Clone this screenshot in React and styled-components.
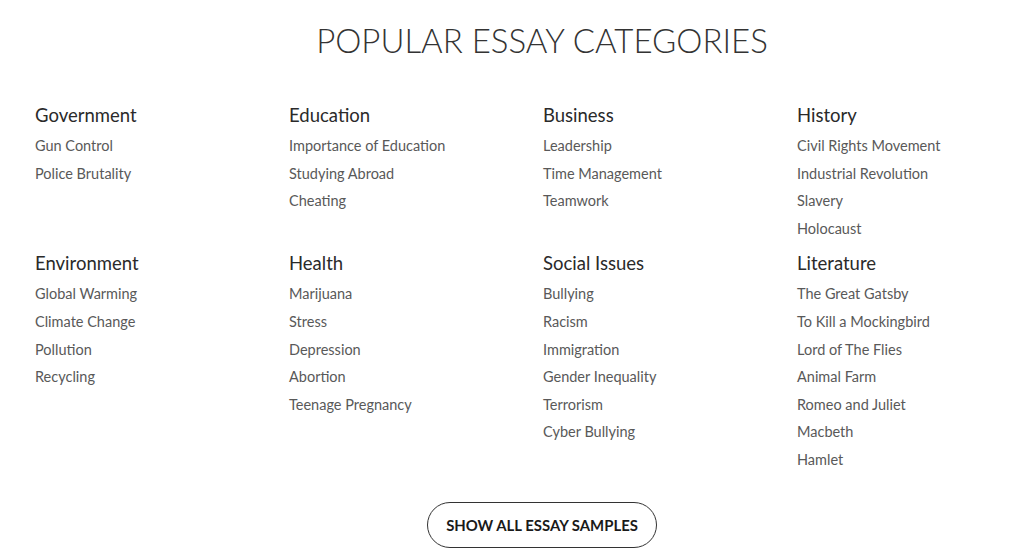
import React from 'react'
import styled, { createGlobalStyle } from 'styled-components'

const GlobalStyle = createGlobalStyle`
  body {
    margin: 0;
    background: #fff;
    font-family: "Lato", "Liberation Sans", sans-serif;
  }
`

const categories = [
  { title: 'Government', items: ['Gun Control', 'Police Brutality'] },
  { title: 'Education', items: ['Importance of Education', 'Studying Abroad', 'Cheating'] },
  { title: 'Business', items: ['Leadership', 'Time Management', 'Teamwork'] },
  { title: 'History', items: ['Civil Rights Movement', 'Industrial Revolution', 'Slavery', 'Holocaust'] },
  { title: 'Environment', items: ['Global Warming', 'Climate Change', 'Pollution', 'Recycling'] },
  { title: 'Health', items: ['Marijuana', 'Stress', 'Depression', 'Abortion', 'Teenage Pregnancy'] },
  { title: 'Social Issues', items: ['Bullying', 'Racism', 'Immigration', 'Gender Inequality', 'Terrorism', 'Cyber Bullying'] },
  { title: 'Literature', items: ['The Great Gatsby', 'To Kill a Mockingbird', 'Lord of The Flies', 'Animal Farm', 'Romeo and Juliet', 'Macbeth', 'Hamlet'] },
]

const Section = styled.section`
  display: flex;
  flex-direction: column;
`

const Title = styled.h2`
  margin: 19px 0 42px;
  padding-left: 60px;
  text-align: center;
  font-size: 33px;
  line-height: 42px;
  font-weight: 300;
  color: #333;
`

const Grid = styled.div`
  display: grid;
  grid-template-columns: repeat(4, 254px);
  row-gap: 9px;
  padding-left: 35px;
`

const Column = styled.div`
  display: flex;
  flex-direction: column;
`

const Heading = styled.h3`
  margin: 0 0 4px;
  font-size: 18.5px;
  line-height: 25px;
  font-weight: 400;
  color: #2a2a2a;
`

const Link = styled.a`
  font-size: 14.5px;
  line-height: 27.6px;
  color: #595959;
  text-decoration: none;
`

const Footer = styled.div`
  display: flex;
  justify-content: center;
  padding-left: 60px;
  margin-top: 28px;
`

const Button = styled.button`
  width: 230px;
  height: 46px;
  border: 1px solid #333;
  border-radius: 23px;
  background: #fff;
  font-family: inherit;
  font-size: 14.9px;
  font-weight: 700;
  color: #1a1a1a;
  cursor: pointer;
`

const App = () => {
  return (
    <Section>
      <GlobalStyle />
      <Title>POPULAR ESSAY CATEGORIES</Title>
      <Grid>
        {categories.map((cat) => (
          <Column key={cat.title}>
            <Heading>{cat.title}</Heading>
            {cat.items.map((item) => (
              <Link key={item} href="#">{item}</Link>
            ))}
          </Column>
        ))}
      </Grid>
      <Footer>
        <Button>SHOW ALL ESSAY SAMPLES</Button>
      </Footer>
    </Section>
  )
}

export default App
